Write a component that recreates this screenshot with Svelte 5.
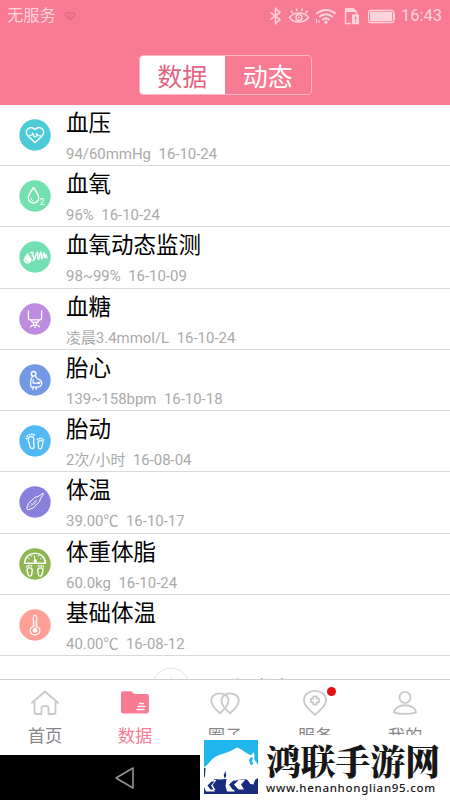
<script lang="ts">
  type Kind = 'heart' | 'oxygen' | 'wave' | 'sugar' | 'pregnant' | 'feet' | 'thermo' | 'scale' | 'basal';
  type Entry = { kind: Kind; color: string; title: string; value: string; date: string };

  const entries: Entry[] = [
    { kind: 'heart',    color: '#4bcbd6', title: '血压',         value: '94/60mmHg',      date: '16-10-24' },
    { kind: 'oxygen',   color: '#73e0b0', title: '血氧',         value: '96%',            date: '16-10-24' },
    { kind: 'wave',     color: '#72dfb3', title: '血氧动态监测', value: '98~99%',         date: '16-10-09' },
    { kind: 'sugar',    color: '#bd8be0', title: '血糖',         value: '凌晨3.4mmol/L',  date: '16-10-24' },
    { kind: 'pregnant', color: '#7499e4', title: '胎心',         value: '139~158bpm',     date: '16-10-18' },
    { kind: 'feet',     color: '#52b9f5', title: '胎动',         value: '2次/小时',       date: '16-08-04' },
    { kind: 'thermo',   color: '#8980dc', title: '体温',         value: '39.00℃',         date: '16-10-17' },
    { kind: 'scale',    color: '#8db551', title: '体重体脂',     value: '60.0kg',         date: '16-10-24' },
    { kind: 'basal',    color: '#ff9f96', title: '基础体温',     value: '40.00℃',         date: '16-08-12' },
  ];

  const views = ['数据', '动态'];
  const tabs = [
    { id: 'home', label: '首页' },
    { id: 'data', label: '数据' },
    { id: 'circle', label: '圈子' },
    { id: 'service', label: '服务' },
    { id: 'me', label: '我的' },
  ];

  let view = $state('数据');
  let tab = $state('data');
</script>

<div class="screen">
  <header>
    <div class="status">
      <span class="carrier">无服务</span>
      <svg class="beat" viewBox="0 0 12 10" width="12" height="10">
        <path d="M6 8.8 1.6 4.8C.2 2.4 3.6.2 6 2.8 8.4.2 11.8 2.4 10.4 4.8Z" />
        <path d="m3.5 4.8 2 1 1.5-1.2 1.5.6" stroke-width=".7" />
      </svg>
      <svg class="sys" viewBox="0 0 126 18" width="126" height="18">
        <path d="M1.5 5.5 11 12.6 6.5 16.5V1.5L11 5.4 1.5 12.5" />
        <path d="M20.5 10.5c4.5-6 14.5-6 19 0-4.5 6-14.5 6-19 0ZM24 6l-2.2-2.2M28 4.2l-.6-2.7M32.6 4.2l.6-2.7M36.4 6l2.2-2.2" />
        <circle cx="30" cy="10.5" r="3" /><circle class="solid" cx="30" cy="10.5" r="1" />
        <path d="M47.5 6.8c5.5-5.2 13.6-5.2 19 0M50.3 10c4-3.8 9.4-3.8 13.4 0M53.4 13c2.2-2 5-2 7.2 0" stroke-width="2" />
        <circle class="solid" cx="57" cy="15.2" r="1.6" />
        <path d="M47.5 12v4M50 13v3" stroke-width="1" />
        <path d="M82 16.5h-5.5V2h8l3 3v3" />
        <path class="solid" d="M76 1.5h8.8l3 3.4H76ZM83 7.5h7v9.8h-7Z" />
        <path d="M86.5 9.5v3.6M86.5 14.3v1.2" stroke="#f87b93" stroke-width="1.3" />
        <rect x="99.6" y="3.3" width="25" height="12.4" rx="1.5" stroke-width="1.2" />
        <rect class="solid" x="101" y="4.7" width="22.2" height="9.6" />
        <path d="M125.6 6.5v6" stroke-width="1.3" />
      </svg>
      <span class="clock">16:43</span>
    </div>
    <div class="segmented">
      {#each views as name}
        <button class:on={view === name} onclick={() => (view = name)}>{name}</button>
      {/each}
    </div>
  </header>

  <main>
    {#each entries as entry}
      <div class="row">
        <svg class="badge" viewBox="0 0 32 32" width="32" height="32">
          <circle class="disc" cx="16" cy="16" r="15.7" style:fill={entry.color} />
          {#if entry.kind === 'heart'}
            <path d="M16 23.8 8.6 16.4C4.800 11.5 11 5.6 16 10.4c5-4.8 11.2 1.1 7.4 6Z" />
            <path d="M10.5 16.3h2.3l1-2.3 1.3 3.8h1.7l1-3.500 1 2.500h2.700" stroke-width="1.1" />
          {:else if entry.kind === 'oxygen'}
            <path d="M14.5 7.5c-2.8 4.4-5.2 7.2-5.2 10.4a5.2 5.2 0 0 0 10.4 0c0-3.2-2.4-6-5.2-10.4Z" />
            <path d="M12 18.2c.1 1.4.8 2.2 2 2.5" stroke-width="1" />
            <text x="20.400" y="24.500">2</text>
          {:else if entry.kind === 'wave'}
            <path class="fill" d="M8.6 13c-2.2 3-3.6 4.3-3.6 6.3a3.7 3.7 0 0 0 7.2 0c0-2-1.4-3.3-3.6-6.3Z" stroke-width="1" />
            <path d="M7.3 19.2c.2 1 .8 1.5 1.6 1.6" style:stroke={entry.color} stroke-width="1" />
            <path d="M11.5 12c2.6-2 3.8.5 1.5 3 2.4-.4 2 3.6 1 4.8 2.5-.4 2.5-7.5 4.5-8.8 1 2-.6 7.3.8 7.7 1.6-.8 1-6.7 2.5-7.700 1.100 1.200-.3 6.500 1 6.900 1.500-.8.800-5.500 2.200-6.200 1 1.100-.2 4.800.9 5.200.8-.2.700-2.200 1.200-3.300.5.500.3 2.400 1 3.100" stroke-width="1.3" />
          {:else if entry.kind === 'sugar'}
            <path d="M9.4 8v7.200c0 1 .7 1.600 1.700 1.600h9.800c1 0 1.700-.6 1.700-1.600V8M12 16.800l1.200 2.500h5.600l1.200-2.500M14.500 19.300v2.300M17.500 19.300v2.300M11.500 23.800c1.400-2.400 7.600-2.400 9 0M16 22v2.400" stroke-width="1.3" />
          {:else if entry.kind === 'pregnant'}
            <circle cx="14.6" cy="9.8" r="2.3" />
            <path d="M13.5 12.3c-2 2.6-2 7.5-1.4 10.8h6.6c3.7-.2 5-3.5 3.3-6.2-1.2-1.6-3.2-1.4-4-2.7l-1.6-2M14.2 15.5v3.7h4.3M14 23.3v2.2M17.2 23.3v2.2" stroke-width="1.2" />
            <path class="fill" d="m20 20.500-1.500-1.500c-.4-1.400 1.100-1.400 1.500-.6.4-.8 1.900-.8 1.500.6Z" stroke="none" />
          {:else if entry.kind === 'feet'}
            <path d="M10.8 12c3-1.2 4.8.6 3.8 4.2-.6 2.2 1.4 4.5.3 6.4-1 1.6-3.5 1-4-1-.5-2-.3-3.6-1.500-5.500-.8-1.500-.2-3.400 1.400-4.100Z" stroke-width="1.3" />
            <path d="M20.6 15.7c2.1-.7 3.7.5 3.3 2.5-.4 1.6-1.100 2.300-1 3.800 0 2.300-3.500 2.500-3.500.1.100-1.300.2-2-.2-3.400-.4-1.300.2-2.500 1.400-3Z" stroke-width="1.2" />
            <path d="M7.5 13.3v.1M8.4 11.1v.1M10.5 9.7v.1M12.900 9.200v.1M15.100 9.700v.2M18.500 14.500v.1M20.500 13.500v.1M22.500 13.500v.1M24.500 14.800v.1" stroke-width="1.8" />
          {:else if entry.kind === 'thermo'}
            <path d="m7.800 22.300 1.700-5 6.500-6 3.500-1 4.500-3.100.7.700-3.200 4.400-1 3.400-6.300 6.200-4.700 1.800Z" stroke-width="1" />
            <path d="m10.600 20.800 6.800-6.800M15 18.500l2-3.500M12.500 17.500l1 1" stroke-width=".7" />
          {:else if entry.kind === 'scale'}
            <path d="M5.500 15.200C6.200 2 25.800 2 26.500 15.200Z" stroke-width="1.5" />
            <path d="m15 7.500 1.300 5.200M9.300 10l1.200 1M22.700 10l-1.200 1M12 7.400l.5 1M19.800 7.400l-.5 1" stroke-width="1" />
            <circle class="fill" cx="16.3" cy="13" r="1" />
            <path d="M8 21.500c0-2 3.900-2.200 5-.5 1.200 1.900-.5 3.200-.3 5.400.1 2.200-3.300 2.400-3.600.3-.2-2-1.100-2.900-1.100-5.200ZM24 21.500c0-2-3.900-2.200-5-.5-1.200 1.900.5 3.200.3 5.400-.1 2.200 3.300 2.400 3.600.3.200-2 1.100-2.900 1.100-5.200Z" stroke-width="1.4" />
            <path d="M7.800 18.500h.1M9.700 17.700h.1M12.300 17.800h.1M19.700 17.800h.1M22.200 17.700h.1M24.200 18.500h.1" stroke-width="1.8" />
          {:else if entry.kind === 'basal'}
            <path d="M14.300 17.200V8.400c0-2.500 3.400-2.500 3.400 0v8.800c5.300 2.500 3.400 8.700-1.700 8.700s-7-6.200-1.700-8.700Z" stroke-width="1.1" />
            <circle class="fill" cx="16" cy="21.3" r="1.7" />
            <path d="M16 12v8" stroke-width=".8" />
          {/if}
        </svg>
        <div class="info">
          <div class="title">{entry.title}</div>
          <div class="detail"><span>{entry.value}</span><span>{entry.date}</span></div>
        </div>
      </div>
    {/each}
    <div class="add">
      <svg viewBox="0 0 40 40" width="40" height="40">
        <circle cx="20" cy="20" r="18.8" />
        <path d="M20 10v20M10 20h20" />
      </svg>
      <span>添加数据</span>
    </div>
  </main>

  <nav>
    {#each tabs as item}
      <button class="tab" class:active={tab === item.id} onclick={() => (tab = item.id)}>
        <svg viewBox="0 0 32 30" width="32" height="30">
          {#if item.id === 'home'}
            <path d="M3 13.800 16 2.500l13 11.300M5.500 12v11.300c0 1.200.5 1.700 1.700 1.700h5.300v-6.300c0-1 .5-1.600 1.500-1.600h4c1 0 1.500.6 1.500 1.600V25h5.300c1.200 0 1.700-.5 1.700-1.700V12" />
          {:else if item.id === 'data'}
            <path class="folder" d="M2 4.500c0-1.400.8-2.200 2.200-2.200h7.600c1.800 0 2 2.700 3.800 2.700h11.900c1.500 0 2.400.8 2.400 2.300v14.800c0 1.500-.8 2.300-2.300 2.300H4.300C2.800 24.400 2 23.600 2 22.100Z" />
            <path class="lines" d="M20.500 14.500h4M19 17.500h7M18 20.500h7" />
          {:else if item.id === 'circle'}
            <path d="M11 24.200C6 20 2.200 16.200 2.200 11.500c0-9.500 17.300-9.500 17.300 0 0 4.700-3.500 8.500-8.500 12.700Z" />
            <path d="M21 24.200c5-4.200 8.800-8 8.800-12.700 0-9.500-17.300-9.500-17.300 0 0 4.700 3.500 8.500 8.500 12.700Z" />
          {:else if item.id === 'service'}
            <path d="M16 26C9 19.500 5 16 5 11.300 5-1.200 27-1.200 27 11.300 27 16 23 19.500 16 26Z" />
            <path d="M14.200 7.500h3.600v2.200H20v3.600h-2.200v2.200h-3.600v-2.200H12V9.700h2.200Z" />
          {:else}
            <circle cx="16" cy="8.4" r="5.5" />
            <path d="M5 23.300c1.500-9.400 20.500-9.400 22 0-5.500 2.200-16.500 2.200-22 0Z" />
          {/if}
        </svg>
        <span>{item.label}</span>
        {#if item.id === 'service'}<i class="dot"></i>{/if}
      </button>
    {/each}
  </nav>

  <footer>
    <svg class="back" viewBox="0 0 22 24" width="22" height="24">
      <path d="M2 12 19 2v20Z" />
    </svg>
  </footer>

  <div class="watermark">
    <svg viewBox="0 0 54 54" width="54" height="54">
      <path d="M0 0h54v54H0Z" fill="#20b5ed" />
      <path d="M0 38h54v16H0Z" fill="#172c7e" />
      <path d="M0 27.500C5 24 8 17.500 14 15.500 21 13.500 28 10.500 33 7.500c4 1 7 4.500 13 7.500 2 0 3-1 3-3 2 2 2 5 1 7l2 3 2 3v13l-3 2-1.500 4.500-3-.5-3-4-2.500-1-3 0-4.500 1-5 3.500-1 3 3.500 5H23l-1.500-5.500 1-7-7.500.5L12 39l-3 1-4 3.500 6 8H2L0 47Z" fill="#fff" />
      <path d="M0 28h1.500L1 36l-1 2ZM21.500 31l.8 5-1.600 2.500-1-3.500Z" fill="#172c7e" />
      <path d="m3 45 5-5h4.500L8.500 45l3 5H7ZM30 44.500l5-5h6.500L37 44.500l3 5h-5.500Z" fill="#fff" />
      <path d="m3.500 45.500 4-4h3l-3.500 4 2.500 4h-3ZM25 44.500l4.500-4h4l-4 4 3 5h-4Z" fill="#172c7e" />
      <path d="m47 17-2 3 1.500 5 3-1-1.500-3 1-3Z" fill="#20b5ed" />
    </svg>
    <div class="brand">
      <strong>鸿联手游网</strong>
      <span>www.henanhonglian95.com</span>
    </div>
  </div>
</div>

<style>
  :global(body) { overflow: hidden; }

  .screen {
    position: relative;
    display: flex;
    flex-direction: column;
    width: 450px;
    height: 800px;
    overflow: hidden;
    background: #fff;
    font-family: Roboto, "Noto Sans CJK SC", sans-serif;
  }

  button {
    padding: 0;
    border: 0;
    background: none;
    font: inherit;
  }

  header {
    flex: none;
    height: 105px;
    background: #f87b93;
  }

  .status {
    display: flex;
    align-items: center;
    height: 31px;
    padding: 0 8px 0 7px;
    color: #ffd3dc;
  }

  .carrier {
    align-self: flex-start;
    font-size: 16.3px;
    line-height: 31px;
  }

  .beat {
    margin-left: 8px;
    fill: none;
    stroke: #cf647b;
  }

  .sys {
    margin-left: auto;
    fill: none;
    stroke: #ffd3dc;
    stroke-width: 1.5;
  }

  .sys .solid { fill: #ffd3dc; stroke: none; }

  .clock {
    margin-left: 6px;
    font-size: 16.5px;
  }

  .segmented {
    display: flex;
    box-sizing: border-box;
    width: 173px;
    height: 40px;
    margin: 24px auto 0 138.5px;
    border: 1px solid #ffb5c3;
    border-radius: 4px;
    overflow: hidden;
  }

  .segmented button {
    flex: 1;
    color: #fff;
    font-size: 25px;
    line-height: 44px;
  }

  .segmented .on {
    background: #fff;
    color: #e2657f;
  }

  main {
    flex: 1;
    min-height: 0;
    overflow: hidden;
  }

  .row {
    display: flex;
    box-sizing: border-box;
    height: 61.23px;
    padding-left: 19px;
    border-bottom: 1px solid #d9d9d9;
  }

  .badge {
    flex: none;
    margin-top: 14px;
    fill: none;
    stroke: #fff;
    stroke-width: 1.4;
    stroke-linecap: round;
    stroke-linejoin: round;
  }

  .badge .disc { stroke: none; }
  .badge .fill { fill: #fff; }
  .badge text { fill: #fff; stroke: none; font-size: 9px; }

  .info {
    margin-left: 15px;
    padding-top: 1px;
  }

  .title {
    height: 36px;
    color: #000;
    font-size: 22.5px;
    line-height: 35px;
  }

  .detail {
    display: flex;
    gap: 7.5px;
    color: #aaa;
    font-size: 14.95px;
    line-height: 25px;
    white-space: nowrap;
  }

  .add {
    display: flex;
    align-items: flex-start;
    gap: 19px;
    padding: 11px 0 0 151px;
    font-size: 22.5px;
    line-height: 47px;
    color: #333;
  }

  .add svg { fill: none; stroke: #e3e3e3; }

  nav {
    display: flex;
    flex: none;
    box-sizing: border-box;
    height: 76px;
    border-top: 1px solid #d0d0d0;
    background: #fff;
  }

  .tab {
    position: relative;
    display: flex;
    flex: 1;
    flex-direction: column;
    align-items: center;
    padding-top: 9px;
    color: #888;
    font-size: 17.3px;
    line-height: 34px;
  }

  .tab svg {
    margin-left: -1px;
    fill: none;
    stroke: #c9c9c9;
    stroke-width: 1.8;
    stroke-linejoin: round;
    stroke-linecap: round;
  }

  .tab.active { color: #f87b93; }
  .tab .folder { fill: #f87b93; stroke: none; }
  .tab .lines { stroke: #fff; stroke-width: 1.3; }

  .dot {
    position: absolute;
    top: 7px;
    left: 57px;
    width: 9px;
    height: 9px;
    border-radius: 50%;
    background: #e60f16;
  }

  footer {
    flex: none;
    height: 45px;
    background: #000;
  }

  .back {
    display: block;
    margin: 11px 0 0 114px;
    fill: none;
    stroke: #949494;
    stroke-width: 1.6;
    stroke-linejoin: round;
  }

  /* site mark laid over the bottom bars */
  .watermark {
    position: absolute;
    right: 0;
    bottom: 0;
    display: flex;
    box-sizing: border-box;
    width: 250px;
    height: 65px;
    padding: 5px 0 0 4px;
    background: #fff;
  }

  .brand {
    display: flex;
    flex-direction: column;
    margin-left: 8px;
    color: #171717;
    white-space: nowrap;
  }

  .brand strong {
    font-family: "Noto Serif CJK SC", "Noto Sans CJK SC", serif;
    font-size: 34.8px;
    font-weight: 900;
    line-height: 40px;
  }

  .brand span {
    font-family: "Noto Sans", sans-serif;
    font-size: 11.5px;
    font-weight: 500;
    letter-spacing: 0.7px;
    line-height: 16px;
  }
</style>
